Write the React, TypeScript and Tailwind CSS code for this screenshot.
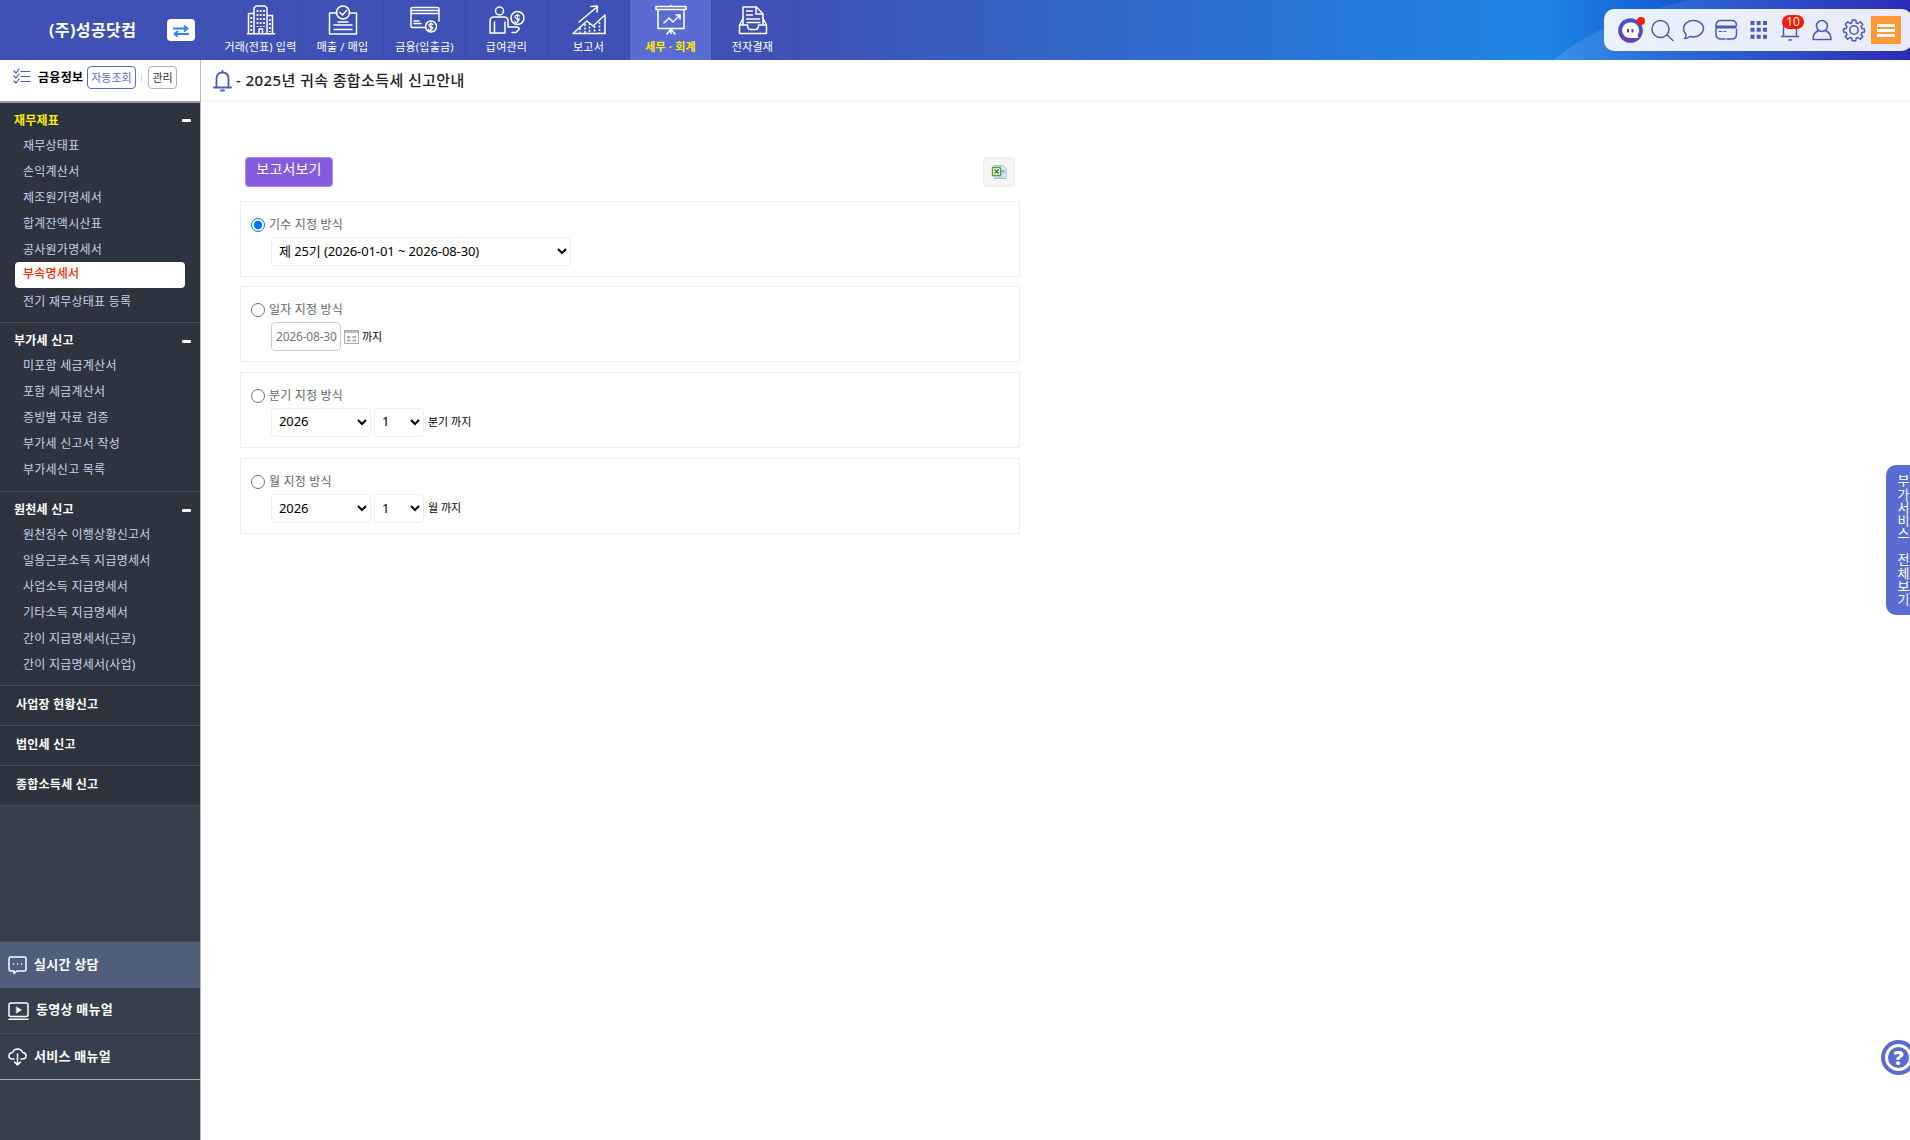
import React, { ReactNode } from 'react'

const menuGroups = [
  {
    title: '재무제표',
    active: true,
    className: 'h-[220px] pt-[5px]',
    items: ['재무상태표', '손익계산서', '제조원가명세서', '합계잔액시산표', '공사원가명세서', '부속명세서', '전기 재무상태표 등록'],
  },
  {
    title: '부가세 신고',
    active: false,
    className: 'h-[169px] pt-[5px]',
    items: ['미포함 세금계산서', '포함 세금계산서', '증빙별 자료 검증', '부가세 신고서 작성', '부가세신고 목록'],
  },
  {
    title: '원천세 신고',
    active: false,
    className: 'h-[194px] pt-[5px]',
    items: [
      '원천징수 이행상황신고서',
      '일용근로소득 지급명세서',
      '사업소득 지급명세서',
      '기타소득 지급명세서',
      '간이 지급명세서(근로)',
      '간이 지급명세서(사업)',
    ],
  },
]

const singleMenus = ['사업장 현황신고', '법인세 신고', '종합소득세 신고']

const Icon = ({ children, className, viewBox }: { children: ReactNode; className: string; viewBox: string }) => (
  <svg
    className={className}
    viewBox={viewBox}
    fill="none"
    stroke="currentColor"
    strokeWidth="1.5"
    strokeLinecap="round"
    strokeLinejoin="round"
  >
    {children}
  </svg>
)

const BuildingIcon = () => (
  <Icon className="h-[30px] w-[36px]" viewBox="0 0 36 30">
    <path d="M11 28V3l2-2h9l2 2v25M5.500 28.500V8.500H11M24 10.500h5.500v18M4.500 28.700h27M16 28v-4h3.500v4" />
    <path d="M14.500 5v17M17.700 5v17M21 5v17M8.300 12v15M26.800 14v13" strokeWidth="1.800" strokeDasharray="2 2" strokeLinecap="butt" />
  </Icon>
)

const SalesIcon = () => (
  <Icon className="h-[30px] w-[36px]" viewBox="0 0 36 30">
    <path d="M12 8H4.500v21h27V8H24" />
    <circle cx="18" cy="7.500" r="6.500" />
    <path d="m15 7.500 2.500 2.500 4-4.500M13 17h10M9 20h14M12 20h15M9 24.500h18" />
  </Icon>
)

const FinanceIcon = () => (
  <Icon className="h-[30px] w-[36px]" viewBox="0 0 36 30">
    <path d="M19 22.500H5.500Q4 22.500 4 21V4Q4 2.500 5.500 2.500h25Q32 2.500 32 4v12M4 5.500h28M4 8.500h28M7 16h5M7 18.500h7" />
    <circle cx="24" cy="21.500" r="5.500" />
    <path d="M26 19.500q-2-1.500-3.500-.5t0 2.300 2.800 1-.8 2.200-3-.5M24 17.700v7.500" strokeWidth="1.200" />
  </Icon>
)

const PayIcon = () => (
  <Icon className="h-[30px] w-[36px]" viewBox="0 0 36 30">
    <circle cx="10.500" cy="6" r="4" />
    <path d="M1 28V16q0-4 4-4h10q4 0 4 4v6h8q3.500 0 3 2.500l-3 3h-4M1 28h15V17M5.500 17v11" />
    <circle cx="28.500" cy="13" r="6.500" />
    <path d="M30.500 11q-2-1.500-3.700-.5t0 2.500 3 1-.8 2.500-3.200-.5M28.500 9v8.300" strokeWidth="1.200" />
  </Icon>
)

const ReportIcon = () => (
  <Icon className="h-[30px] w-[36px]" viewBox="0 0 36 30">
    <path d="M2 28.500 16 16l6 5 12-11v18.500zM8 17 26 2M20 1.500l6.500-.5-.5 6" />
    <path d="M9 23v5M14 19v9M18.500 18v10M23.500 21v7M28.500 17v11" strokeDasharray="2 1.500" strokeLinecap="butt" />
  </Icon>
)

const TaxIcon = () => (
  <Icon className="h-[30px] w-[36px]" viewBox="0 0 36 30">
    <path d="M3 1.500h30v3H3zM5 4.500v19h26v-19M18 0v1M18 23.500v5M18 24l-4 5M18 24l4 5M11 18l5-5 4 4 7-7M23 10h4v4" />
  </Icon>
)

const ApprovalIcon = () => (
  <Icon className="h-[30px] w-[36px]" viewBox="0 0 36 30">
    <path d="M4.500 28.500V20h8q0 4.500 3 4.500h5q3 0 3-4.500h8v8.500zM4.500 20l4-7.500M31.500 20l-4-7.500M8 19V2h13.500l6.500 7v10M21 2.500V9h6.500M11.500 6h6M11.500 10h6M11.500 14h13M12 17.500h13" />
  </Icon>
)

const navItems = [
  { label: '거래(전표) 입력', icon: <BuildingIcon />, active: false },
  { label: '매출 / 매입', icon: <SalesIcon />, active: false },
  { label: '금융(입출금)', icon: <FinanceIcon />, active: false },
  { label: '급여관리', icon: <PayIcon />, active: false },
  { label: '보고서', icon: <ReportIcon />, active: false },
  { label: '세무 · 회계', icon: <TaxIcon />, active: true },
  { label: '전자결재', icon: <ApprovalIcon />, active: false },
]

const TopTools = () => (
  <div className="mt-[9px] flex h-[42px] w-[308px] items-center rounded-[10px] bg-white/90 pl-[14px] text-[#4a5bbb]">
    <div className="relative flex w-[28px]">
      <svg className="mt-[1px] h-[25px] w-[25px]" viewBox="0 0 25 25">
        <defs>
          <linearGradient id="bot" x1="0" y1="0" x2="0" y2="1">
            <stop offset="0" stopColor="#3b55d8" />
            <stop offset="1" stopColor="#6b3fb0" />
          </linearGradient>
        </defs>
        <circle cx="12.500" cy="12.500" r="12.300" fill="url(#bot)" />
        <path d="M12 4.500a8 7.800 0 1 0 0 15.600h8.500l-1-3.200A8 7.800 0 0 0 12 4.500z" fill="#fff" />
        <path d="M10 11v3.500M14.500 11v3.500" stroke="#5548c8" strokeWidth="2" />
      </svg>
      <span className="absolute top-0 left-[19px] h-[8px] w-[8px] rounded-full bg-[#ff1a00]" />
    </div>
    <Icon className="h-[24px] w-[32px]" viewBox="0 0 32 24">
      <circle cx="14.500" cy="11" r="8.500" />
      <path d="m21 17 6 5.500" />
    </Icon>
    <Icon className="h-[24px] w-[32px]" viewBox="0 0 32 24">
      <path d="M8 16.500Q5.500 13.500 5.500 10.500C5.500 6 10 2.500 15.500 2.500s10 3.500 10 8-4.500 8.500-10 8.500q-1.800 0-3.500-.5-2.500 2-5.500 2 2-1.500 1.500-4z" />
    </Icon>
    <Icon className="h-[24px] w-[32px]" viewBox="0 0 32 24">
      <path d="M14 21h-3q-5 0-5-5V7.500q0-5 5-5h10.500q5 0 5 5M18 21h3.500q5 0 5-5v-4.500" />
      <path d="M6 9h20.500" strokeWidth="3" strokeLinecap="butt" />
      <path d="M9 13.500h3M14 13.500h2M14 21h5" strokeWidth="1.200" />
    </Icon>
    <svg className="h-[24px] w-[32px]" viewBox="0 0 32 24" fill="currentColor">
      <path d="M8.500 3h4v4h-4zM14.700 3h4v4h-4zM21 3h4v4h-4zM8.500 9.800h4v4h-4zM14.700 9.800h4v4h-4zM21 9.800h4v4h-4zM8.500 16.800h4v4h-4zM14.700 16.800h4v4h-4zM21 16.800h4v4h-4z" />
    </svg>
    <div className="relative w-[32px]">
      <Icon className="h-[24px] w-[32px]" viewBox="0 0 32 24">
        <path d="M7.500 18.500h17M9.500 18v-8q0-6 6.500-6t6.500 6v8M15 22h2.500" />
      </Icon>
      <span className="absolute -top-[3px] left-[8px] flex h-[14px] w-[22px] items-center justify-center rounded-full bg-[#ff1a00] text-[12px] leading-none text-white">
        10
      </span>
    </div>
    <Icon className="h-[24px] w-[32px]" viewBox="0 0 32 24">
      <circle cx="16" cy="8" r="5.500" />
      <path d="M12.500 12.500Q7 15 7 21.500h18Q25 15 19.500 12.500" />
    </Icon>
    <Icon className="h-[24px] w-[32px]" viewBox="0 0 32 24">
      <circle cx="16" cy="12" r="4.200" />
      <path d="M14.300 2h3.400l.5 2.700 1.800.8 2.300-1.600 2.400 2.400-1.600 2.300.8 1.800 2.600.5v3.200l-2.600.5-.8 1.900 1.600 2.200-2.400 2.400-2.300-1.600-1.800.8-.5 2.500h-3.400l-.5-2.500-1.800-.8-2.300 1.600-2.400-2.400 1.600-2.200-.8-1.900-2.600-.5v-3.200l2.600-.5.8-1.800-1.600-2.300 2.400-2.400L12 5.500l1.800-.8z" />
    </Icon>
    <div className="ml-[1px] flex h-[28px] w-[30px] shrink-0 flex-col items-center justify-center gap-[2px] bg-[#ff9933]">
      <span className="h-[3px] w-[18px] bg-white" />
      <span className="h-[3px] w-[18px] bg-white" />
      <span className="h-[3px] w-[18px] bg-white" />
    </div>
  </div>
)

const Header = () => (
  <header className="relative flex h-[60px] shrink-0 bg-[linear-gradient(90deg,#3f51b5_0,#3f51b5_780px,#1e86e5_1540px,#1762d6_1650px,#2b35bd_1860px,#2c2cb8_1910px)]">
    <svg className="absolute top-0 right-0 h-[60px] w-[360px]" viewBox="0 0 360 60">
      <defs>
        <linearGradient id="wave" x1="0" y1="0" x2="1" y2="0">
          <stop offset="0" stopColor="#fff" stopOpacity=".12" />
          <stop offset="1" stopColor="#fff" stopOpacity="0" />
        </linearGradient>
      </defs>
      <path d="M3 60Q55 18 140 0h220v60z" fill="url(#wave)" />
    </svg>
    <div className="flex w-[220px] items-center">
      <h1 className="ml-[49px] w-[118px] text-[16px] font-bold tracking-[0.4px] whitespace-nowrap text-white">
        (주)성공닷컴
      </h1>
      <button className="flex h-[22px] w-[28px] items-center justify-center rounded-[4px] bg-white">
        <svg className="mt-[2px] h-[12px] w-[16px]" viewBox="0 0 16 12" fill="none" stroke="#2f80ff" strokeWidth="1.800">
          <path d="M0 3.500h14M11 .5l3.500 3-3.500 3M16 9H2M5 6 1.500 9 5 12" />
        </svg>
      </button>
    </div>
    <nav className="flex">
      {navItems.map((item) => (
        <div
          key={item.label}
          className={
            item.active
              ? 'flex w-[82px] flex-col items-center border-r border-[#3b4bab] bg-[#5a6cd2] pt-[5px] font-bold text-[#ffeb00]'
              : 'flex w-[82px] flex-col items-center border-r border-[#3b4bab] pt-[5px] text-white'
          }
        >
          <div className="text-white">{item.icon}</div>
          <span className="mt-[3px] text-[11px] leading-[18px] tracking-[0.2px] whitespace-nowrap">{item.label}</span>
        </div>
      ))}
    </nav>
    <div className="relative ml-auto w-[306px]">
      <TopTools />
    </div>
  </header>
)

const Sidebar = () => (
  <aside className="flex w-[201px] shrink-0 flex-col border-r border-[#bbbbbb] bg-[#36404d]">
    <div className="flex h-[43px] items-start border-b-2 border-[#9a9da2] bg-white pt-[6px] pl-[13px]">
      <Icon className="mt-[2px] h-[16px] w-[18px] text-[#4a5bbb]" viewBox="0 0 18 16">
        <path d="m1 3 2 2 3-4M1 8l2 2 3-4M1 13l2 2 3-4M8 3.500h9M8 8.500h9M8 13.500h9" strokeWidth="1.200" />
      </Icon>
      <b className="ml-[7px] w-[49px] text-[12px] leading-[24px] tracking-[0.3px] whitespace-nowrap text-black">
        금융정보
      </b>
      <button className="h-[23px] w-[49px] rounded-[4px] border border-[#5a6cd2] text-[11px] leading-[21px] text-[#5a6cd2]">
        자동조회
      </button>
      <span className="mr-[6px] ml-[5px] mt-[8px] h-[8px] w-px bg-[#dddddd]" />
      <button className="h-[23px] w-[29px] rounded-[4px] border border-[#b0b0b0] text-[11px] leading-[21px] text-[#333333]">
        관리
      </button>
    </div>

    {menuGroups.map((group) => (
      <section key={group.title} className={`border-b border-[#454d59] bg-[#2d343f] ${group.className}`}>
        <div
          className={
            group.active
              ? 'flex h-[24px] items-center justify-between pt-[1px] pr-[9px] pl-[14px] text-[12px] font-bold tracking-[0.2px] text-[#ffee00]'
              : 'flex h-[24px] items-center justify-between pt-[2px] pr-[9px] pl-[14px] text-[12px] font-bold tracking-[0.25px] text-white'
          }
        >
          {group.title}
          <span className="h-[3px] w-[9px] rounded-[1px] bg-white" />
        </div>
        <ul>
          {group.items.map((item) => (
            <li
              key={item}
              className={
                item === '부속명세서'
                  ? 'mr-[15px] ml-[15px] h-[26px] rounded-[4px] bg-white pl-[8px] text-[12px] leading-[23px] font-medium tracking-[0.2px] text-[#ff2a00]'
                  : 'h-[26px] pl-[23px] text-[12px] leading-[27px] tracking-[0.25px] text-[#c5d3e8]'
              }
            >
              {item}
            </li>
          ))}
        </ul>
      </section>
    ))}

    {singleMenus.map((item) => (
      <div
        key={item}
        className="flex h-[40px] items-center border-b border-[#454d59] bg-[#2d343f] pb-[1px] pl-[16px] text-[12px] font-bold tracking-[0.25px] text-white"
      >
        {item}
      </div>
    ))}

    <div className="mt-[135px] border-b border-[#a0a6ae] text-[13px] font-bold tracking-[0.25px] text-white">
      <div className="flex h-[47px] items-center border-t border-[#454d59] bg-[#4f5f7b] pl-[8px]">
        <Icon className="mr-[7px] h-[18px] w-[19px]" viewBox="0 0 19 18">
          <path d="M3 1h13q2 0 2 2v10q0 2-2 2H9l-3 2.500V15H3q-2 0-2-2V3q0-2 2-2zM5.500 8h.1M9.500 8h.1M13.500 8h.1" />
        </Icon>
        실시간 상담
      </div>
      <div className="flex h-[46px] items-center border-b border-[#454d59] pl-[8px]">
        <Icon className="mr-[7px] h-[18px] w-[21px]" viewBox="0 0 21 18">
          <path d="M3 1h15q2 0 2 2v10q0 1.500-2 1.500H3q-2 0-2-1.500V3q0-2 2-2zM1 17.200h19" />
          <path d="m8.500 5 5 3-5 3z" fill="currentColor" strokeWidth=".5" />
        </Icon>
        <span className="pb-[2px]">동영상 매뉴얼</span>
      </div>
      <div className="flex h-[45px] items-center pl-[8px]">
        <Icon className="mr-[7px] h-[18px] w-[19px]" viewBox="0 0 19 18">
          <path d="M6 11H4.500Q1 11 1 8t3.500-3.500Q6 1 9.500 1T15 4.500Q18 5 18 8t-3.500 3H13M9.500 6v11M6.500 14l3 3 3-3" />
        </Icon>
        서비스 매뉴얼
      </div>
    </div>
  </aside>
)

const selectClass =
  'h-[29px] rounded-[4px] border border-[#eeeeee] bg-white pb-[2px] pl-[3px] text-[13px] tracking-[-0.1px] text-black'

const OptionCard = ({ label, checked, children }: { label: string; checked?: boolean; children: ReactNode }) => (
  <div className="h-[76px] border border-[#eeeeee] pt-[14px] pl-[10px] last:mt-px">
    <label className="flex h-[18px] items-center text-[12px] tracking-[0.2px] text-[#666666]">
      <input type="radio" name="method" defaultChecked={checked} className="m-0 mr-[4px] h-[14px] w-[14px]" />
      {label}
    </label>
    <div className="mt-[3px] flex h-[29px] items-center pl-[20px] text-[11px] text-black">{children}</div>
  </div>
)

const ReportForm = () => (
  <div className="mt-[55px] ml-[39px] w-[780px]">
    <div className="flex justify-between pr-[5px] pl-[5px]">
      <button className="h-[30px] w-[88px] rounded-[4px] border border-[#a98be9] bg-[#845adf] pb-[7px] text-[14px] leading-[21px] tracking-[0.2px] text-white">
        보고서보기
      </button>
      <button className="flex h-[30px] w-[32px] items-center justify-center rounded-[4px] border border-[#eeeeee] bg-[#f5f5f5]">
        <svg className="h-[16px] w-[16px]" viewBox="0 0 16 16">
          <path d="M3.500 1.500h8.500l3 3v10H3.500z" fill="#e1edf2" stroke="#a9bcc4" />
          <path d="M9 6h4.500v2.500H9z" fill="#4fc3f7" />
          <path d="M9 10h4M5 13h8" stroke="#8fcbe8" />
          <path d="M1.500 3.500h8v8h-8z" fill="#fff" stroke="#5a9e3c" strokeWidth="1.400" />
          <path d="m3.500 5.500 4 4M7.500 5.500l-4 4" stroke="#3f8a2e" strokeWidth="1.600" />
        </svg>
      </button>
    </div>
    <div className="mt-[14px] flex flex-col gap-[9.4px]">
      <OptionCard label="기수 지정 방식" checked>
        <select className={`w-[300px] ${selectClass}`}>
          <option>제 25기 (2026-01-01 ~ 2026-08-30)</option>
        </select>
      </OptionCard>
      <OptionCard label="일자 지정 방식">
        <input
          className="h-[29px] w-[70px] rounded-[4px] border border-[#cccccc] pl-[4px] text-[12px] tracking-[-0.2px] text-[#777777]"
          defaultValue="2026-08-30"
        />
        <svg className="mr-[3px] ml-[3px] h-[15px] w-[15px]" viewBox="0 0 15 15" fill="none" stroke="#aaa">
          <path d="M.5 1.500h14v13H.5z" />
          <path d="M0 2.500h15" strokeWidth="3" strokeDasharray="2.500 .6" />
          <path d="M3 8h9M3 11.500h9" strokeWidth="1.800" strokeDasharray="3.500 2" />
        </svg>
        까지
      </OptionCard>
      <OptionCard label="분기 지정 방식">
        <select className={`mr-[3px] w-[100px] ${selectClass}`}>
          <option>2026</option>
        </select>
        <select className={`mr-[4px] w-[50px] ${selectClass}`}>
          <option>1</option>
        </select>
        분기 까지
      </OptionCard>
      <OptionCard label="월 지정 방식">
        <select className={`mr-[3px] w-[100px] ${selectClass}`}>
          <option>2026</option>
        </select>
        <select className={`mr-[4px] w-[50px] ${selectClass}`}>
          <option>1</option>
        </select>
        월 까지
      </OptionCard>
    </div>
  </div>
)

const App = () => {
  return (
    <div className="relative flex h-screen w-screen flex-col overflow-hidden bg-white font-['Noto_Sans','Noto_Sans_CJK_KR',sans-serif]">
      <Header />
      <div className="flex min-h-0 flex-1">
        <Sidebar />
        <main className="flex-1">
          <div className="flex h-[42px] items-center border-b-2 border-[#f7f7f7] pl-[12px]">
            <Icon className="mt-[2px] h-[22px] w-[19px] text-[#4a5bbb]" viewBox="0 0 19 22">
              <path d="M1 17.500h17M3.500 17V9q0-6.500 6-6.500t6 6.500v8M9.500 1v1M8 20.500h3" strokeWidth="1.800" />
            </Icon>
            <h2 className="ml-[4px] text-[15px] font-medium tracking-[0.4px] whitespace-nowrap text-[#222222]">
              - 2025년 귀속 종합소득세 신고안내
            </h2>
          </div>
          <ReportForm />
        </main>
      </div>

      <div className="absolute top-[465px] left-[1886px] flex h-[150px] w-[24px] flex-col items-start gap-[13px] rounded-l-[10px] bg-[#5a6cd2] pt-[9px] pl-[10px] text-[13px] leading-[14px] tracking-[0.2px] text-white [text-orientation:upright]">
        <span className="[writing-mode:vertical-rl]">부가서비스</span>
        <span className="[writing-mode:vertical-rl]">전체보기</span>
      </div>
      <div className="absolute top-[1040px] left-[1881px] flex h-[35px] w-[35px] items-center justify-center rounded-full bg-[#5a6cd2]">
        <div className="flex h-[27px] w-[27px] items-center justify-center rounded-full border-[3px] border-white text-[20px] leading-none font-black text-white">
          ?
        </div>
      </div>
    </div>
  )
}

export default App
